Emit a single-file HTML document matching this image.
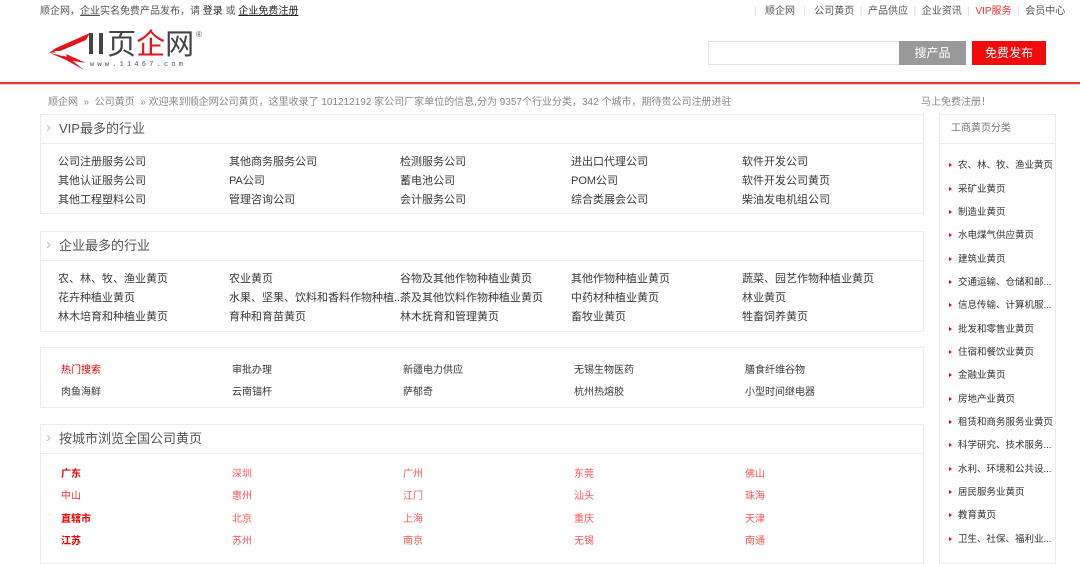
<!DOCTYPE html>
<html><head><meta charset="utf-8"><style>
*{margin:0;padding:0;box-sizing:border-box}
body{width:1080px;height:552px;overflow:hidden;background:#fff;font-family:"Liberation Sans","Noto Sans CJK SC",sans-serif;font-size:11px;color:#333;position:relative}
.a{position:absolute;white-space:nowrap}
.panel{position:absolute;left:40px;width:884px;border:1px solid #ececec;background:#fff}
.ph{height:29px;border-bottom:1px solid #ececec;line-height:28px;padding-left:18px;font-size:13px;color:#555;position:relative}
.ph:before{content:"›";position:absolute;left:5px;top:-1px;color:#bbb;font-size:15px}
.cell{position:absolute;font-size:11px;color:#3a3a3a;white-space:nowrap}
.side{position:absolute;left:939px;top:114px;width:117px;height:450px;border:1px solid #ececec;overflow:hidden}
.side .h{height:29px;border-bottom:1px solid #ececec;line-height:28px;padding-left:11px;color:#777;font-size:10px}
.side .i{position:absolute;left:9px;font-size:9.5px;color:#333;white-space:nowrap}
.side .i:before{content:"";display:inline-block;border-left:3px solid #e00;border-top:2.5px solid transparent;border-bottom:2.5px solid transparent;margin-right:6px;vertical-align:1px}
</style></head><body>
<div class="a" style="left:40px;top:2px;color:#555;font-size:10px">顺企网，<u>企业</u>实名免费产品发布，请 <span style="color:#222">登录</span> 或 <u style="color:#222">企业免费注册</u></div>
<div class="a" style="left:754px;top:2px;color:#555;font-size:10px;word-spacing:0">
<span style="color:#ddd">|</span>&nbsp;&nbsp;&nbsp;顺企网&nbsp;&nbsp;&nbsp;<span style="color:#ddd">|</span>&nbsp;&nbsp;&nbsp;公司黄页&nbsp;&nbsp;<span style="color:#ddd">|</span>&nbsp;&nbsp;产品供应&nbsp;&nbsp;<span style="color:#ddd">|</span>&nbsp;&nbsp;企业资讯&nbsp;&nbsp;<span style="color:#ddd">|</span>&nbsp;&nbsp;<span style="color:#e33">VIP服务</span>&nbsp;&nbsp;<span style="color:#ddd">|</span>&nbsp;&nbsp;会员中心</div>
<svg class="a" style="left:46px;top:30px" width="70" height="42" viewBox="0 0 70 42">
<path d="M44 3 L10 18 L3 23 L12 22 L40 10 Z" fill="#e3151b"/>
<path d="M4 23 L20 30 L38 40 L22 27 Z" fill="#e3151b"/>
<path d="M8 21 L28 21 L15 26 Z" fill="#fff"/>
<path d="M20 24 L40 33 L22 30Z" fill="#e3151b"/>
</svg>
<div class="a" style="left:87px;top:30px;height:30px;line-height:30px;font-size:29px;color:#444;letter-spacing:0"><span style="letter-spacing:2px;font-weight:bold">ll</span><span>页</span><span style="color:#e3151b">企</span>网</div>
<div class="a" style="left:196px;top:30px;font-size:8px;color:#555">®</div>
<div class="a" style="left:90px;top:61px;font-size:7px;color:#555;letter-spacing:3.2px;font-family:'Liberation Mono',monospace;background:#fff">www.11467.com</div>
<div class="a" style="left:708px;top:41px;width:193px;height:24px;border:1px solid #e2e2e2"></div>
<div class="a" style="left:899px;top:41px;width:67px;height:24px;background:#999;color:#fff;font-size:12px;line-height:24px;text-align:center">搜产品</div>
<div class="a" style="left:972px;top:41px;width:74px;height:24px;background:#f00c0c;color:#fff;font-size:12px;line-height:24px;text-align:center">免费发布</div>
<div class="a" style="left:0;top:82px;width:1080px;height:2px;background:#e33"></div>
<div class="a" style="left:0;top:84px;width:1080px;height:1px;background:#f4c6c6"></div>
<div class="a" style="left:48px;top:93px;font-size:10px;color:#888">顺企网 &nbsp;» &nbsp;公司黄页 &nbsp;» 欢迎来到顺企网公司黄页，这里收录了 101212192 家公司厂家单位的信息,分为 9357个行业分类，342 个城市，期待贵公司注册进驻</div>
<div class="a" style="left:921px;top:93px;font-size:10px;color:#888">马上免费注册！</div>

<div class="panel" style="top:114px;height:100px"><div class="ph">VIP最多的行业</div>
<div class="cell" style="left:17px;top:38px">公司注册服务公司</div><div class="cell" style="left:188px;top:38px">其他商务服务公司</div><div class="cell" style="left:359px;top:38px">检测服务公司</div><div class="cell" style="left:530px;top:38px">进出口代理公司</div><div class="cell" style="left:701px;top:38px">软件开发公司</div>
<div class="cell" style="left:17px;top:57px">其他认证服务公司</div><div class="cell" style="left:188px;top:57px">PA公司</div><div class="cell" style="left:359px;top:57px">蓄电池公司</div><div class="cell" style="left:530px;top:57px">POM公司</div><div class="cell" style="left:701px;top:57px">软件开发公司黄页</div>
<div class="cell" style="left:17px;top:76px">其他工程塑料公司</div><div class="cell" style="left:188px;top:76px">管理咨询公司</div><div class="cell" style="left:359px;top:76px">会计服务公司</div><div class="cell" style="left:530px;top:76px">综合类展会公司</div><div class="cell" style="left:701px;top:76px">柴油发电机组公司</div>
</div>

<div class="panel" style="top:231px;height:101px"><div class="ph">企业最多的行业</div>
<div class="cell" style="left:17px;top:38px">农、林、牧、渔业黄页</div><div class="cell" style="left:188px;top:38px">农业黄页</div><div class="cell" style="left:359px;top:38px">谷物及其他作物种植业黄页</div><div class="cell" style="left:530px;top:38px">其他作物种植业黄页</div><div class="cell" style="left:701px;top:38px">蔬菜、园艺作物种植业黄页</div>
<div class="cell" style="left:17px;top:57px">花卉种植业黄页</div><div class="cell" style="left:188px;top:57px">水果、坚果、饮料和香料作物种植...</div><div class="cell" style="left:359px;top:57px">茶及其他饮料作物种植业黄页</div><div class="cell" style="left:530px;top:57px">中药材种植业黄页</div><div class="cell" style="left:701px;top:57px">林业黄页</div>
<div class="cell" style="left:17px;top:76px">林木培育和种植业黄页</div><div class="cell" style="left:188px;top:76px">育种和育苗黄页</div><div class="cell" style="left:359px;top:76px">林木抚育和管理黄页</div><div class="cell" style="left:530px;top:76px">畜牧业黄页</div><div class="cell" style="left:701px;top:76px">牲畜饲养黄页</div>
</div>

<div class="panel" style="top:347px;height:61px">
<div class="cell" style="left:20px;top:13px;font-size:10px;color:#e00">热门搜索</div><div class="cell" style="left:191px;top:13px;font-size:10px">审批办理</div><div class="cell" style="left:362px;top:13px;font-size:10px">新疆电力供应</div><div class="cell" style="left:533px;top:13px;font-size:10px">无锡生物医药</div><div class="cell" style="left:704px;top:13px;font-size:10px">膳食纤维谷物</div>
<div class="cell" style="left:20px;top:35px;font-size:10px">肉鱼海鲜</div><div class="cell" style="left:191px;top:35px;font-size:10px">云南锚杆</div><div class="cell" style="left:362px;top:35px;font-size:10px">萨郁奇</div><div class="cell" style="left:533px;top:35px;font-size:10px">杭州热熔胶</div><div class="cell" style="left:704px;top:35px;font-size:10px">小型时间继电器</div>
</div>

<div class="panel" style="top:424px;height:140px;color:#e33"><div class="ph">按城市浏览全国公司黄页</div>
<div class="cell" style="left:20px;top:40px;font-size:10px;color:#e00;font-weight:bold">广东</div><div class="cell" style="left:191px;top:40px;font-size:10px;color:#f55">深圳</div><div class="cell" style="left:362px;top:40px;font-size:10px;color:#f55">广州</div><div class="cell" style="left:533px;top:40px;font-size:10px;color:#f55">东莞</div><div class="cell" style="left:704px;top:40px;font-size:10px;color:#f55">佛山</div>
<div class="cell" style="left:20px;top:62px;font-size:10px;color:#f33">中山</div><div class="cell" style="left:191px;top:62px;font-size:10px;color:#f55">惠州</div><div class="cell" style="left:362px;top:62px;font-size:10px;color:#f55">江门</div><div class="cell" style="left:533px;top:62px;font-size:10px;color:#f55">汕头</div><div class="cell" style="left:704px;top:62px;font-size:10px;color:#f55">珠海</div>
<div class="cell" style="left:20px;top:85px;font-size:10px;color:#e00;font-weight:bold">直辖市</div><div class="cell" style="left:191px;top:85px;font-size:10px;color:#f55">北京</div><div class="cell" style="left:362px;top:85px;font-size:10px;color:#f55">上海</div><div class="cell" style="left:533px;top:85px;font-size:10px;color:#f55">重庆</div><div class="cell" style="left:704px;top:85px;font-size:10px;color:#f55">天津</div>
<div class="cell" style="left:20px;top:107px;font-size:10px;color:#e00;font-weight:bold">江苏</div><div class="cell" style="left:191px;top:107px;font-size:10px;color:#f55">苏州</div><div class="cell" style="left:362px;top:107px;font-size:10px;color:#f55">南京</div><div class="cell" style="left:533px;top:107px;font-size:10px;color:#f55">无锡</div><div class="cell" style="left:704px;top:107px;font-size:10px;color:#f55">南通</div>
</div>

<div class="side"><div class="h">工商黄页分类</div>
<div class="i" style="top:42px">农、林、牧、渔业黄页</div>
<div class="i" style="top:66px">采矿业黄页</div>
<div class="i" style="top:89px">制造业黄页</div>
<div class="i" style="top:112px">水电煤气供应黄页</div>
<div class="i" style="top:136px">建筑业黄页</div>
<div class="i" style="top:159px">交通运输、仓储和邮...</div>
<div class="i" style="top:182px">信息传输、计算机服...</div>
<div class="i" style="top:206px">批发和零售业黄页</div>
<div class="i" style="top:229px">住宿和餐饮业黄页</div>
<div class="i" style="top:252px">金融业黄页</div>
<div class="i" style="top:276px">房地产业黄页</div>
<div class="i" style="top:299px">租赁和商务服务业黄页</div>
<div class="i" style="top:322px">科学研究、技术服务...</div>
<div class="i" style="top:346px">水利、环境和公共设...</div>
<div class="i" style="top:369px">居民服务业黄页</div>
<div class="i" style="top:392px">教育黄页</div>
<div class="i" style="top:416px">卫生、社保、福利业...</div>
</div>
</body></html>
